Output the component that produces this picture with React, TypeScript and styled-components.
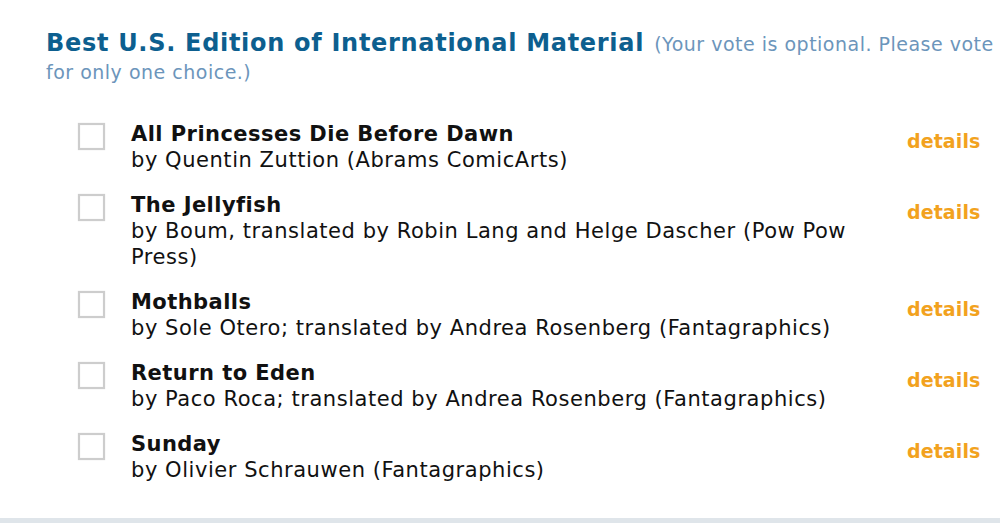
import * as React from 'react';
import styled, { createGlobalStyle } from 'styled-components';

const Global = createGlobalStyle`
  html, body {
    margin: 0;
    padding: 0;
    background: #ffffff;
  }
  body {
    font-family: "DejaVu Sans", Verdana, sans-serif;
  }
`;

const Page = styled.div`
  height: 523px;
  display: flex;
  flex-direction: column;
  overflow: hidden;
`;

const Section = styled.div`
  flex: 1;
  padding: 30px 0 0 46px;
`;

const Heading = styled.h2`
  margin: 0;
  font-size: 24px;
  line-height: 27px;
  font-weight: bold;
  letter-spacing: 0.7px;
  color: #0d5f8f;
`;

const Note = styled.span`
  margin-left: 1px;
  font-size: 19px;
  line-height: 27px;
  font-weight: normal;
  letter-spacing: 0.5px;
  color: #6c95bb;
`;

const List = styled.div`
  margin-top: 35px;
  padding-left: 32px;
  display: flex;
  flex-direction: column;
  gap: 19px;
`;

const Row = styled.div`
  display: flex;
  align-items: flex-start;
`;

const Box = styled.span`
  flex: none;
  box-sizing: border-box;
  width: 27px;
  height: 27px;
  margin-top: 2px;
  border: 2px solid #cdcdcd;
  box-shadow: 0 0 1px #d8d8d8, inset 0 0 1px #d8d8d8;
  background: #fff;
`;

const Text = styled.div`
  flex: 1;
  margin-left: 26px;
  font-size: 21px;
  line-height: 26px;
  letter-spacing: 0.55px;
  color: #111;
  max-width: 735px;
`;

const Title = styled.div`
  font-weight: bold;
  letter-spacing: 0.45px;
`;

const Details = styled.a`
  flex: none;
  margin-left: auto;
  width: 93px;
  padding-top: 7px;
  font-size: 19px;
  line-height: 26px;
  font-weight: bold;
  letter-spacing: 0.1px;
  color: #f2a21e;
  text-decoration: none;
`;

const Footer = styled.div`
  height: 5px;
  background: #dfe5ea;
`;

const choices = [
  { title: 'All Princesses Die Before Dawn', by: 'by Quentin Zuttion (Abrams ComicArts)' },
  { title: 'The Jellyfish', by: 'by Boum, translated by Robin Lang and Helge Dascher (Pow Pow Press)' },
  { title: 'Mothballs', by: 'by Sole Otero; translated by Andrea Rosenberg (Fantagraphics)' },
  { title: 'Return to Eden', by: 'by Paco Roca; translated by Andrea Rosenberg (Fantagraphics)' },
  { title: 'Sunday', by: 'by Olivier Schrauwen (Fantagraphics)' },
];

export default function App() {
  return (
    <Page>
      <Global />
      <Section>
        <Heading>
          Best U.S. Edition of International Material{' '}
          <Note>(Your vote is optional. Please vote for only one choice.)</Note>
        </Heading>
        <List>
          {choices.map((c) => (
            <Row key={c.title}>
              <Box />
              <Text>
                <Title>{c.title}</Title>
                {c.by}
              </Text>
              <Details href="#">details</Details>
            </Row>
          ))}
        </List>
      </Section>
      <Footer />
    </Page>
  );
}
